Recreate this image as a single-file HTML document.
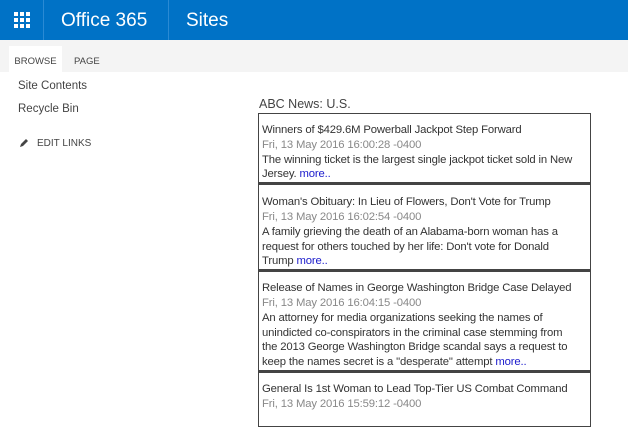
<!DOCTYPE html>
<html><head><meta charset="utf-8"><style>
*{margin:0;padding:0;box-sizing:border-box}
body{width:628px;height:412px;overflow:hidden;background:#fff;font-family:"Liberation Sans",sans-serif;color:#333;position:relative}
.top{position:absolute;left:0;top:0;width:628px;height:40px;background:#0072c6;color:#fff}
.div{position:absolute;top:0;width:1px;height:40px;background:#2a8ad4}
.tb{position:absolute;left:0;top:40px;width:628px;height:32px;background:#f4f4f4}
.tab{position:absolute;top:46px;height:26px;font-size:9.5px;color:#444;padding-top:10px}
.nav{position:absolute;left:18px;font-size:11.5px;color:#444}
.box{position:absolute;left:258px;top:113px;width:333px}
.it{border:1px solid #444;padding:9px 3px 0px 3px;font-size:11.3px;line-height:14.8px;white-space:nowrap;letter-spacing:-0.15px}
.it+.it{border-top:2px solid #444}
.d{color:#888}
a{color:#1a1acc;text-decoration:none}
</style></head><body>
<div class="top">
<svg style="position:absolute;left:14px;top:12px" width="16" height="16" viewBox="0 0 16 16" fill="#fff">
<rect x="0" y="0" width="4" height="4"/><rect x="6" y="0" width="4" height="4"/><rect x="12" y="0" width="4" height="4"/>
<rect x="0" y="6" width="4" height="4"/><rect x="6" y="6" width="4" height="4"/><rect x="12" y="6" width="4" height="4"/>
<rect x="0" y="12" width="4" height="4"/><rect x="6" y="12" width="4" height="4"/><rect x="12" y="12" width="4" height="4"/></svg>
<div class="div" style="left:43px"></div>
<div style="position:absolute;left:61px;top:10px;font-size:19px">Office 365</div>
<div class="div" style="left:168px"></div>
<div style="position:absolute;left:186px;top:10px;font-size:19px">Sites</div>
</div>
<div class="tb"></div>
<div class="tab" style="left:9px;width:53px;background:#fff;text-align:center">BROWSE</div>
<div class="tab" style="left:74px">PAGE</div>
<div class="nav" style="top:80px">Site Contents</div>
<div class="nav" style="top:103px">Recycle Bin</div>
<svg style="position:absolute;left:19px;top:138px" width="10" height="10" viewBox="0 0 10 10"><path d="M1 9 L2 6 L7 1 L9 3 L4 8 Z" fill="#444"/></svg>
<div class="nav" style="top:138px;left:37px;font-size:10px">EDIT LINKS</div>
<div style="position:absolute;left:259px;top:97px;font-size:12.5px;color:#444">ABC News: U.S.</div>
<div class="box">
<div class="it">Winners of $429.6M Powerball Jackpot Step Forward<br><span class="d">Fri, 13 May 2016 16:00:28 -0400</span><br>The winning ticket is the largest single jackpot ticket sold in New<br>Jersey. <a>more..</a></div>
<div class="it" style="padding-top:10px">Woman's Obituary: In Lieu of Flowers, Don't Vote for Trump<br><span class="d">Fri, 13 May 2016 16:02:54 -0400</span><br>A family grieving the death of an Alabama-born woman has a<br>request for others touched by her life: Don't vote for Donald<br>Trump <a>more..</a></div>
<div class="it">Release of Names in George Washington Bridge Case Delayed<br><span class="d">Fri, 13 May 2016 16:04:15 -0400</span><br>An attorney for media organizations seeking the names of<br>unindicted co-conspirators in the criminal case stemming from<br>the 2013 George Washington Bridge scandal says a request to<br>keep the names secret is a "desperate" attempt <a>more..</a></div>
<div class="it">General Is 1st Woman to Lead Top-Tier US Combat Command<br><span class="d">Fri, 13 May 2016 15:59:12 -0400</span><br>&nbsp;</div>
</div>
</body></html>
